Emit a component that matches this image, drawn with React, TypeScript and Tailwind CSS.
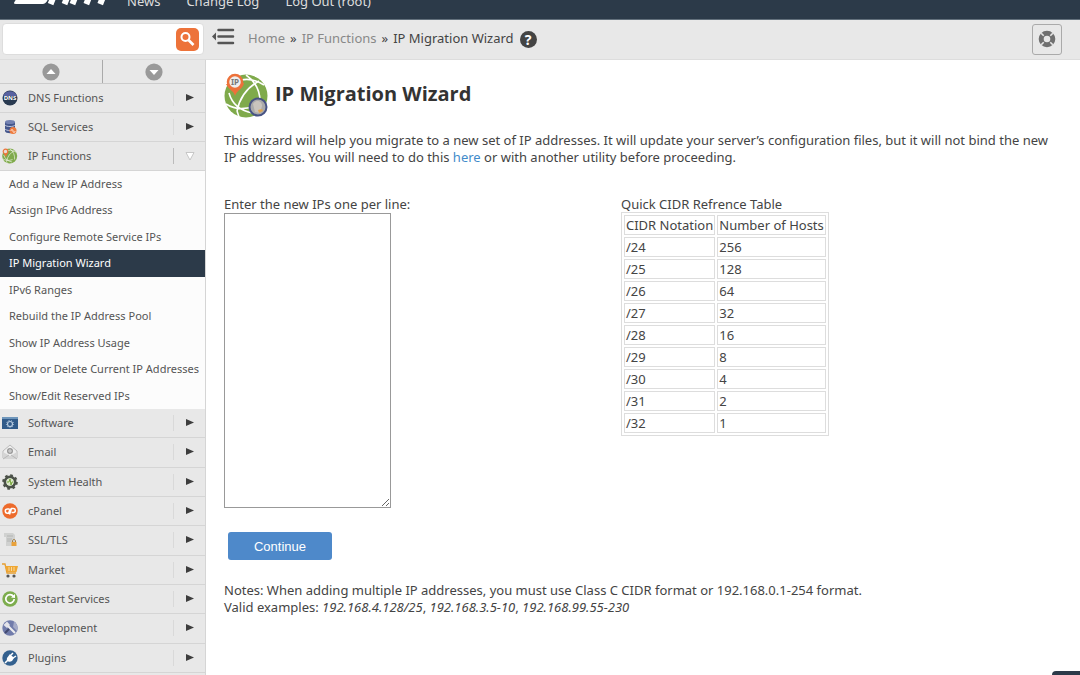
import type { ReactNode } from 'react';

const TOP_ITEMS = ['DNS Functions', 'SQL Services', 'IP Functions'];

const SUB_ITEMS = [
  'Add a New IP Address',
  'Assign IPv6 Address',
  'Configure Remote Service IPs',
  'IP Migration Wizard',
  'IPv6 Ranges',
  'Rebuild the IP Address Pool',
  'Show IP Address Usage',
  'Show or Delete Current IP Addresses',
  'Show/Edit Reserved IPs',
];

const BOTTOM_ITEMS = [
  'Software',
  'Email',
  'System Health',
  'cPanel',
  'SSL/TLS',
  'Market',
  'Restart Services',
  'Development',
  'Plugins',
];

const CIDR_ROWS = [
  ['/24', '256'],
  ['/25', '128'],
  ['/26', '64'],
  ['/27', '32'],
  ['/28', '16'],
  ['/29', '8'],
  ['/30', '4'],
  ['/31', '2'],
  ['/32', '1'],
];

const Globe = () => (
  <>
    <circle cx="22" cy="23" r="21.5" fill="#7faa4b" />
    <g fill="none" stroke="#fff" strokeWidth="1.6">
      <path d="M17 7C27 5 34 8 40 12M22 2C32 9 37 20 36 33M35 8C24 14 16 23 13 38M5 20C8 31 17 38 29 40M2 31C10 36 20 37 30 33M13 38l2 6" />
    </g>
  </>
);

const ICONS: Record<string, ReactNode> = {
  'DNS Functions': (
    <>
      <circle cx="8" cy="8" r="7.5" fill="#293a50" />
      <path d="M1 6a7.5 7.5 0 0 1 14 0z" fill="#5861a0" />
      <text x="8" y="10" textAnchor="middle" fontSize="6" fontWeight="700" fill="#fff">DNS</text>
    </>
  ),
  'SQL Services': (
    <>
      <path d="M3 3v9c0 3 10 3 10 0V3z" fill="#44568c" />
      <ellipse cx="8" cy="3" rx="5" ry="2" fill="#7382b2" />
      <path d="M3 6c1 2 9 2 10 0M3 10c1 2 9 2 10 0" fill="none" stroke="#c1c8dc" />
      <circle cx="11" cy="11.5" r="3.5" fill="#ee7b3d" />
      <path d="M9 12c0-2 2-2 2 0s2 2 2 0" fill="none" stroke="#fff" strokeWidth=".8" />
    </>
  ),
  'IP Functions': (
    <>
      <g transform="scale(.35)"><Globe /></g>
      <circle cx="3.5" cy="3.5" r="2.3" fill="#e8ded6" stroke="#ee743a" strokeWidth="1.2" />
      <path d="m2 6 2 3 1-3z" fill="#ee743a" />
    </>
  ),
  Software: (
    <>
      <path d="M0 2h16v12H0z" fill="#315b8a" />
      <path d="M0 2h16v2H0z" fill="#6f96bb" />
      <circle cx="8" cy="9" r="2.5" fill="none" stroke="#b8cbe0" strokeWidth="1.2" />
      <circle cx="8" cy="9" r="3.6" fill="none" stroke="#b8cbe0" strokeDasharray="1 1.5" />
    </>
  ),
  Email: (
    <>
      <path d="M1 7 8 1l7 6v7H1z" fill="#eee" stroke="#bbb" />
      <circle cx="8" cy="7" r="3" fill="#999" />
      <circle cx="8" cy="7" r="1.2" fill="none" stroke="#eee" strokeWidth=".8" />
      <path d="m1 8 7 4 7-4v7H1z" fill="#d5d5d5" />
      <path d="m1 15 6-4m8 4-6-4" stroke="#aaa" strokeWidth=".7" />
    </>
  ),
  'System Health': (
    <>
      <circle cx="8" cy="8" r="5" fill="none" stroke="#4b5148" strokeWidth="3" />
      <circle cx="8" cy="8" r="6.7" fill="none" stroke="#4b5148" strokeWidth="2.2" strokeDasharray="2.63 2.63" />
      <circle cx="8" cy="8" r="3.7" fill="#dce9ca" />
      <path d="M5 8h2l1-3 1 6 1-3h1" fill="none" stroke="#78a83d" />
    </>
  ),
  cPanel: (
    <>
      <circle cx="8" cy="8" r="7.7" fill="#ed6b2c" />
      <path d="M7 6H5.4a2 2 0 0 0 0 4.2h1.2l1.6-4.7M7.5 11.5l2-6h1.8a2 2 0 0 1 0 4H9.5" fill="none" stroke="#fff" strokeWidth="1.5" />
    </>
  ),
  'SSL/TLS': (
    <>
      <path d="M2 1h9l2 2v11H4V5H2z" fill="#d0d1d0" />
      <path d="M5 4h6M5 7h5M5 9h4" stroke="#b2b4b2" />
      <path d="M10.5 10V9c0-2 3-2 3 0v1" fill="none" stroke="#a37b3c" />
      <path d="M9.5 10h5v4h-5z" fill="#e9a23b" />
    </>
  ),
  Market: (
    <>
      <path d="M0 2h3l2 9h9" fill="none" stroke="#e69e31" strokeWidth="1.3" />
      <path d="M3 4h13l-1.5 6H5z" fill="#efa733" />
      <path d="M7 5v4m2.5-4v4M12 5v4" stroke="#fbe5bd" strokeWidth=".8" />
      <circle cx="6" cy="14" r="1.6" fill="#555" />
      <circle cx="12" cy="14" r="1.6" fill="#555" />
    </>
  ),
  'Restart Services': (
    <>
      <circle cx="8" cy="8" r="7.7" fill="#7dad4e" />
      <path d="M11.5 5.5A4.2 4.2 0 1 0 12.2 8" fill="none" stroke="#fff" strokeWidth="1.7" />
      <path d="m9 6.5 4 .5V3z" fill="#fff" />
    </>
  ),
  Development: (
    <>
      <circle cx="8" cy="8" r="7.7" fill="#717cab" />
      <path d="M12 1.5A7.7 7.7 0 0 1 15 11l-4-4z" fill="#a5abc8" />
      <path d="m5 5 8 8" stroke="#eee" strokeWidth="2.2" />
      <path d="M1.5 5 5 1.5 8 5 5 8z" fill="#e4e4ea" />
      <path d="m3 13 4-4" stroke="#41496f" strokeWidth="2" />
    </>
  ),
  Plugins: (
    <>
      <circle cx="8" cy="8" r="7.7" fill="#34618f" />
      <path d="m3 13 3-3" stroke="#fff" strokeWidth="1.6" />
      <path d="M5 8c-1 3 2 5 5 3l2-3-4-4z" fill="#fff" />
      <path d="m9 5 2-2m0 5 3-2" stroke="#fff" strokeWidth="1.5" />
    </>
  ),
};

const MenuRow = ({ label, open = false }: { label: string; open?: boolean }) => (
  <li className="flex min-h-0 border-b border-[#d5d5d5]">
    <button type="button" className="flex flex-1 items-center pl-0.5 text-left text-[11px] text-[#555]">
      <svg viewBox="0 0 16 16" className="mr-2.5 h-4 w-4 shrink-0" aria-hidden="true">
        {ICONS[label]}
      </svg>
      <span className="flex-1">{label}</span>
      <span className={`flex h-4 w-8 items-center border-l pl-[11px] ${open ? 'border-[#bbb]' : 'border-[#d9d9d9]'}`}>
        <svg viewBox="0 0 10 10" className="h-2.5 w-2.5" aria-hidden="true">
          {open ? (
            <path d="M1 1.5h8L5 9z" fill="#fff" stroke="#bbb" strokeWidth=".8" />
          ) : (
            <path d="M1 1v7l8-3.5z" fill="#3d3d3d" />
          )}
        </svg>
      </span>
    </button>
  </li>
);

const Sidebar = () => (
  <aside className="w-[206px] shrink-0 overflow-hidden border-r border-[#d5d5d5] bg-[#e8e8e8]">
    <div className="grid h-6 grid-cols-2 border-b border-[#ccc]">
      {['up', 'down'].map((dir) => (
        <button
          key={dir}
          type="button"
          aria-label={`Scroll ${dir}`}
          className="flex items-center justify-center first:border-r first:border-[#aaa]"
        >
          <svg viewBox="0 0 18 18" className="h-[18px] w-[18px]" aria-hidden="true">
            <circle cx="9" cy="9" r="8.6" fill="#999" />
            <path d={dir === 'up' ? 'm4.5 11 4.5-5 4.5 5z' : 'm4.5 7 4.5 5 4.5-5z'} fill="#fff" />
          </svg>
        </button>
      ))}
    </div>
    <ul className="grid min-h-[87px] auto-rows-fr">
      {TOP_ITEMS.map((label) => (
        <MenuRow key={label} label={label} open={label === 'IP Functions'} />
      ))}
    </ul>
    <ul className="grid min-h-[238px] auto-rows-fr bg-[#fcfcfc]">
      {SUB_ITEMS.map((label) => (
        <li key={label} className="grid">
          <a
            href="#"
            className={`flex items-center pl-[9px] text-[11px] whitespace-nowrap ${
              label === 'IP Migration Wizard' ? 'bg-[#2c3a49] text-white' : 'text-[#555]'
            }`}
          >
            {label}
          </a>
        </li>
      ))}
    </ul>
    <ul className="grid min-h-[264px] auto-rows-fr">
      {BOTTOM_ITEMS.map((label) => (
        <MenuRow key={label} label={label} />
      ))}
    </ul>
  </aside>
);

const Header = () => (
  <header className="flex h-5 items-end overflow-hidden border-b border-[#63707c] bg-[#2c3a49] text-[13px] text-[#ddd]">
    <svg viewBox="0 0 128 19" className="h-[19px] w-[127px] shrink-0" role="img" aria-label="WHM">
      <path d="M18-4 14 3q0 1 2 1h27q3 0 5-4l2-4z" fill="#fff" />
      <g fill="none" stroke="#fff" strokeWidth="6">
        <path d="m51 4 4-10M65 4l4-10M73 4l4-10M87 4l4-10M101 4l4-10" />
      </g>
    </svg>
    <nav className="flex gap-[26px] pb-2 leading-5">
      <a href="#">News</a>
      <a href="#">Change Log</a>
      <a href="#">Log Out (root)</a>
    </nav>
  </header>
);

const Toolbar = () => (
  <div className="flex h-10 items-center border-b border-[#ddd] bg-[#e8e8e8] pb-px">
    <form className="ml-0.5 flex h-8 w-[202px] items-center rounded border border-[#ddd] bg-white pr-1">
      <input aria-label="Search" className="min-w-0 flex-1 px-2 text-sm outline-none" />
      <button type="button" aria-label="Find" className="h-[23px] w-[23px] rounded-[5px] bg-[#ed733a]">
        <svg viewBox="0 0 23 23" aria-hidden="true">
          <circle cx="9.5" cy="9" r="4" fill="none" stroke="#fff" strokeWidth="2" />
          <path d="m12.5 12 5 5" stroke="#fff" strokeWidth="2.6" />
        </svg>
      </button>
    </form>
    <button type="button" aria-label="Toggle menu" className="ml-2 flex h-[22px] w-[23px] items-start">
      <svg viewBox="0 0 23 18" aria-hidden="true">
        <path d="M0 8.500 4 4.500v8z" fill="#555" />
        <path d="M6.5 2H21M6.5 8.500H21M6.500 15H21" stroke="#555" strokeWidth="2.5" strokeLinecap="round" />
      </svg>
    </button>
    <nav aria-label="Breadcrumb" className="ml-[13px] flex items-center gap-[5px] text-[13px] text-[#444]">
      <a href="#" className="text-[#888]">Home</a>
      <span>»</span>
      <a href="#" className="text-[#888]">IP Functions</a>
      <span>»</span>
      <span>IP Migration Wizard</span>
    </nav>
    <button type="button" aria-label="Help" className="ml-1.5 h-[17px] w-[17px] rounded-full bg-[#444] text-sm leading-[17px] font-bold text-white">
      ?
    </button>
    <button
      type="button"
      aria-label="Support"
      className="mr-[18px] ml-auto flex h-[31px] w-[30px] items-center justify-center rounded-[3px] border border-[#aaa]"
    >
      <svg viewBox="0 0 18 18" className="h-[18px] w-[18px]" aria-hidden="true">
        <circle cx="9" cy="9" r="5.8" fill="none" stroke="#707070" strokeWidth="5" />
        <path d="m3.2 3.2 2.5 2.5m6.6 6.6 2.5 2.5m0-11.600-2.500 2.500m-6.600 6.600-2.500 2.500" stroke="#e8e8e8" strokeWidth="1.6" />
      </svg>
    </button>
  </div>
);

export default function App() {
  return (
    <div className="relative flex h-screen flex-col overflow-hidden bg-white font-['Noto_Sans',sans-serif] text-[#444]">
      <Header />
      <Toolbar />
      <div className="flex min-h-0 flex-1">
        <Sidebar />
        <main className="min-w-0 flex-1 px-[18px] pt-[13px] text-[13px] leading-[17px]">
          <div className="flex items-center">
            <svg viewBox="0 0 45 46" className="h-[46px] w-[45px]" aria-hidden="true">
              <Globe />
              <path d="M2 11C5 17 10 18 11 23c2-6 8-7 9-13z" fill="#ed713a" />
              <circle cx="11" cy="9" r="7" fill="#eee" stroke="#ed713a" strokeWidth="2.5" />
              <text x="11" y="12" textAnchor="middle" fontSize="8" fontWeight="700" fill="#777">IP</text>
              <circle cx="34" cy="34" r="8.5" fill="#aaa" stroke="#475384" strokeWidth="2" />
              <path d="M29 31c3-5 9-3 9 2l-2 7-5-1z" fill="#c9c4bd" />
              <path d="m34 37 4-1 1 2-4 2z" fill="#dfa650" />
            </svg>
            <h1 className="ml-1.5 pb-1 font-['Open_Sans',sans-serif] text-xl leading-6 font-bold text-[#333]">IP Migration Wizard</h1>
          </div>
          <p className="mt-[13px]">
            This wizard will help you migrate to a new set of IP addresses. It will update your server’s configuration files, but it will not bind the new IP addresses. You will need to do this{' '}
            <a href="#" className="text-[#428bca]">here</a> or with another utility before proceeding.
          </p>
          <form>
            <div className="mt-[30px] grid grid-cols-[397px_1fr] items-start">
              <div>
                <label htmlFor="ips" className="block">Enter the new IPs one per line:</label>
                <textarea id="ips" className="block h-[295px] w-[167px] border border-[#999] bg-white" />
              </div>
              <div>
                <table className="border-separate border-spacing-0.5 border border-[#ddd]">
                  <caption className="text-left leading-4 whitespace-nowrap">Quick CIDR Refrence Table</caption>
                  <thead>
                    <tr>
                      <th className="h-5 border border-[#ddd] px-px text-left font-normal">CIDR Notation</th>
                      <th className="h-5 border border-[#ddd] px-px text-left font-normal">Number of Hosts</th>
                    </tr>
                  </thead>
                  <tbody>
                    {CIDR_ROWS.map(([notation, hosts]) => (
                      <tr key={notation}>
                        <td className="h-5 border border-[#ddd] px-px">{notation}</td>
                        <td className="h-5 border border-[#ddd] px-px">{hosts}</td>
                      </tr>
                    ))}
                  </tbody>
                </table>
              </div>
            </div>
            <button type="button" className="mt-6 ml-1 block h-7 w-[104px] rounded-[3px] bg-[#4e89ca] font-['Liberation_Sans',sans-serif] text-[13px] text-white">
              Continue
            </button>
          </form>
          <p className="mt-[22px]">
            Notes: When adding multiple IP addresses, you must use Class C CIDR format or 192.168.0.1-254 format.
            <br />
            Valid examples: <em>192.168.4.128/25</em>, <em>192.168.3.5-10</em>, <em>192.168.99.55-230</em>
          </p>
        </main>
      </div>
      <div className="absolute right-0 bottom-0 h-1 w-7 rounded-tl bg-[#2c3a49]" />
    </div>
  );
}
